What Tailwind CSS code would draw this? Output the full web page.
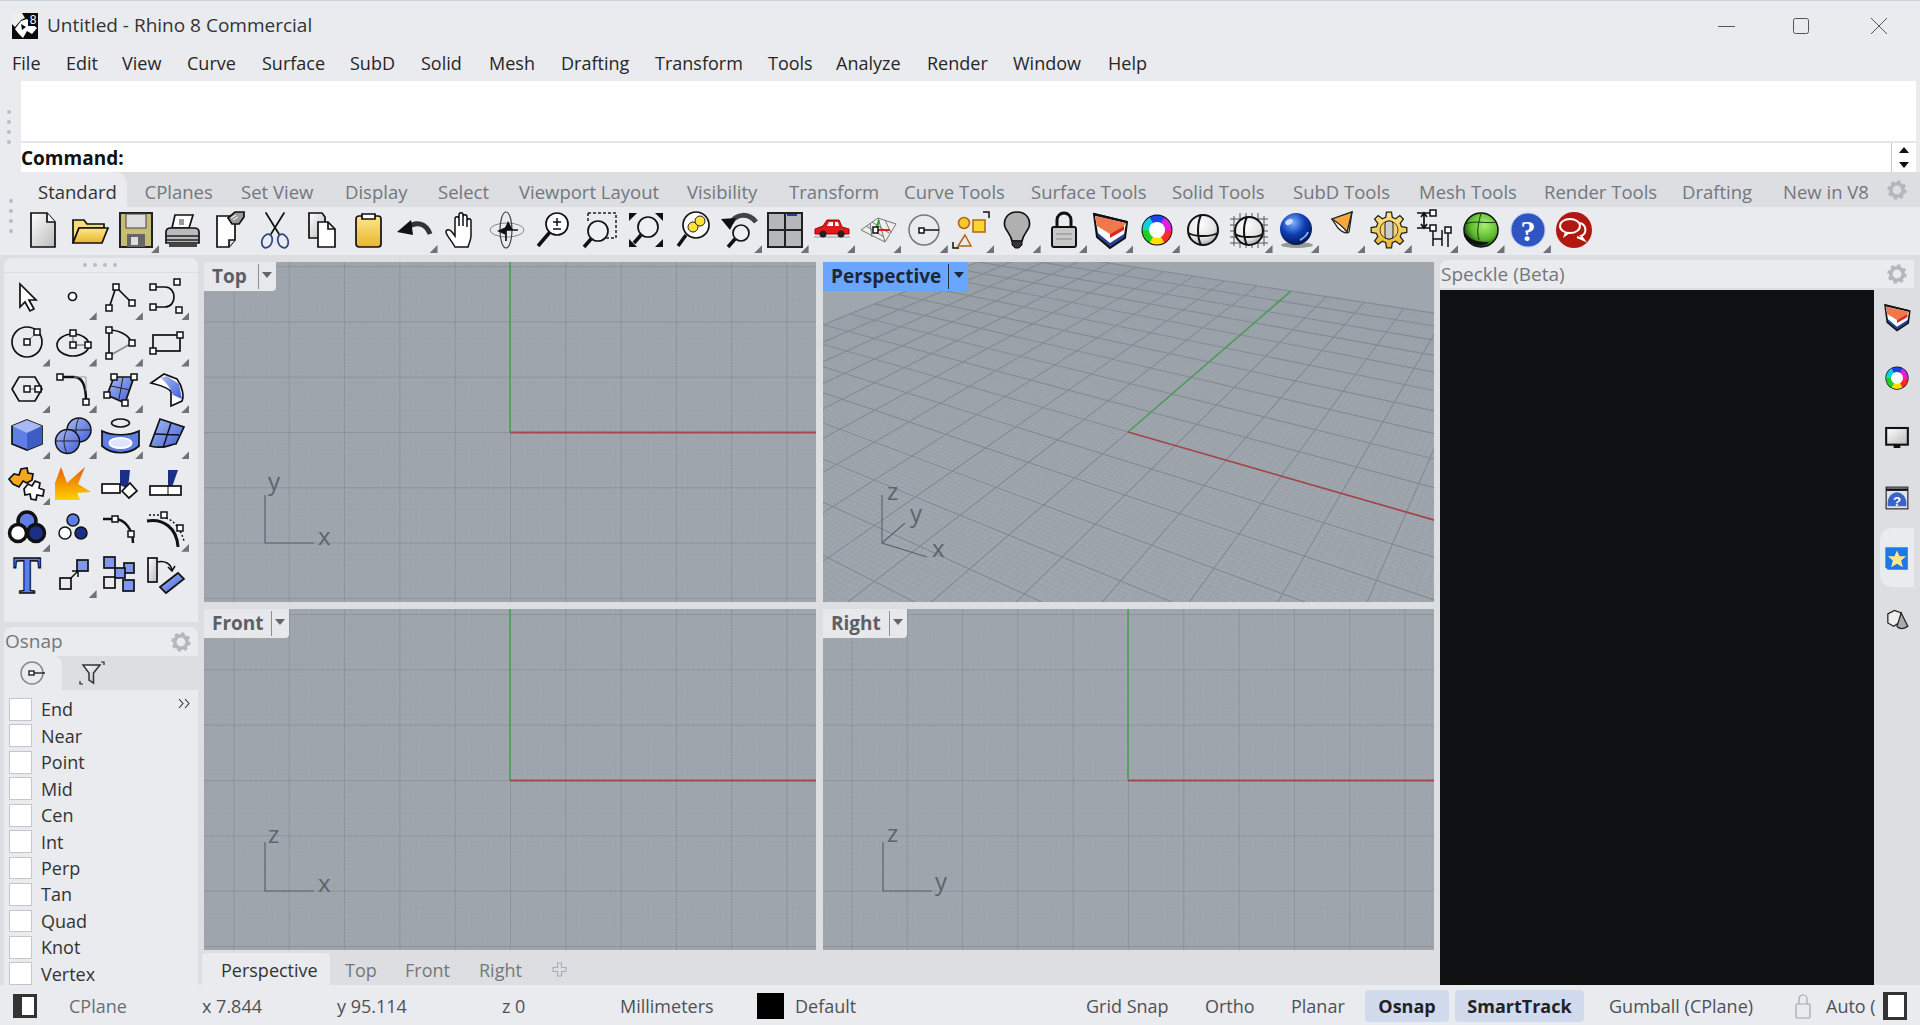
<!DOCTYPE html>
<html lang="en">
<head>
    <meta charset="UTF-8">
    <title>Untitled - Rhino 8 Commercial</title>
    <script src="https://cdn.jsdelivr.net/npm/@tailwindcss/browser@4"></script>
</head>
<body class="w-[1920px] h-[1025px] overflow-hidden bg-[#e9ebef] text-[#262626] text-[18px] leading-none font-['Open_Sans','Noto_Sans',sans-serif]">
<svg class="absolute w-0 h-0">
    <defs>
        <linearGradient id="gw" x1="0" y1="0" x2="1" y2="1"><stop offset="0" stop-color="#fff"/><stop offset="1" stop-color="#bbb"/></linearGradient>
        <linearGradient id="gy" x1="0" y1="0" x2="0" y2="1"><stop offset="0" stop-color="#ffe68a"/><stop offset="1" stop-color="#e8b62c"/></linearGradient>
        <linearGradient id="gb" x1="0" y1="0" x2="1" y2="1"><stop offset="0" stop-color="#a9b9f5"/><stop offset="1" stop-color="#3f60d6"/></linearGradient>
        <linearGradient id="go" x1="0" y1="0" x2="0" y2="1"><stop offset="0" stop-color="#e85c00"/><stop offset="1" stop-color="#ffd000"/></linearGradient>
        <radialGradient id="rs" cx=".4" cy=".3" r=".85"><stop offset="0" stop-color="#fff"/><stop offset=".6" stop-color="#e2e2e2"/><stop offset="1" stop-color="#8a8a8a"/></radialGradient>
        <radialGradient id="rb" cx=".4" cy=".3" r=".75"><stop offset="0" stop-color="#7fb2ff"/><stop offset=".5" stop-color="#0f3fb8"/><stop offset="1" stop-color="#02103c"/></radialGradient>
        <radialGradient id="rg" cx=".6" cy=".35" r=".7"><stop offset="0" stop-color="#a8f070"/><stop offset=".6" stop-color="#5cb82e"/><stop offset="1" stop-color="#0d2a08"/></radialGradient>
        <pattern id="minor" width="5.53" height="5.53" patternUnits="userSpaceOnUse"><path d="M0 0V5.53M0 0H5.53" fill="none" stroke="#979ea6" stroke-width=".8"/></pattern>
        <pattern id="major" width="55.3" height="55.3" patternUnits="userSpaceOnUse"><path d="M0 0V55.3M0 0H55.3" fill="none" stroke="#7d848c" stroke-width="1"/></pattern>
        <symbol id="gear" viewBox="0 0 20 20"><circle cx="10" cy="10" r="6.2" fill="none" stroke="#b4b7bb" stroke-width="3.6"/><circle cx="10" cy="10" r="8.4" fill="none" stroke="#b4b7bb" stroke-width="2.6" stroke-dasharray="3.3 3.3"/></symbol>
        <symbol id="wheel" viewBox="0 0 40 40">
            <circle cx="20" cy="20" r="15.500" fill="#111"/>
            <g fill="none" stroke-width="9">
                <circle cx="20" cy="20" r="10" stroke="#ff2a2a" pathLength="6" stroke-dasharray="1.05 4.95" stroke-dashoffset="0"/>
                <circle cx="20" cy="20" r="10" stroke="#ffe000" pathLength="6" stroke-dasharray="1.05 4.95" stroke-dashoffset="-1"/>
                <circle cx="20" cy="20" r="10" stroke="#20d020" pathLength="6" stroke-dasharray="1.05 4.95" stroke-dashoffset="-2"/>
                <circle cx="20" cy="20" r="10" stroke="#10d0e0" pathLength="6" stroke-dasharray="1.05 4.95" stroke-dashoffset="-3"/>
                <circle cx="20" cy="20" r="10" stroke="#2040f0" pathLength="6" stroke-dasharray="1.05 4.95" stroke-dashoffset="-4"/>
                <circle cx="20" cy="20" r="10" stroke="#e020e0" pathLength="6" stroke-dasharray="1.05 4.95" stroke-dashoffset="-5"/>
            </g>
            <circle cx="20" cy="20" r="8" fill="#fff"/>
        </symbol>
        <symbol id="layers" viewBox="0 0 40 40">
            <path d="M4 4L37 12L35 28L20 38L7 27z" fill="#26409a" stroke="#111" stroke-width="2"/>
            <path d="M5 6L36 13L34 24L20 33L8 23z" fill="#fff"/>
            <path d="M5 6L36 13L33 17L20 24L7 16z" fill="#f0784a"/>
            <path d="M20 24L34 16L34 20L20 28z" fill="#d92a20"/>
            <path d="M4 4L37 12" stroke="#111" stroke-width="2"/>
        </symbol>
    </defs>
</svg>

<!-- titlebar -->
<div class="h-[50px] flex items-center pl-[12px] border-t border-[#c9d3df]">
    <svg width="26" height="26" viewBox="0 0 26 26"><rect width="26" height="26" fill="#0a0a0a"/><path d="M0 0H10L13 5L9 7L3 14L0 11z" fill="#eee"/><path d="M3 16L9 8L15 6L19 10L25 15L20 21L15 18L11 25L6 20z" fill="#fff"/><path d="M9 11L14 14L10 17z" fill="#0a0a0a"/><rect x="16" y="0" width="10" height="13" fill="#0a0a0a"/><text x="21" y="11" font-size="12" fill="#fff" text-anchor="middle" font-family="Liberation Sans">8</text></svg>
    <span class="ml-[9px] text-[#333] text-[19px]">Untitled - Rhino 8 Commercial</span>
    <div class="ml-auto flex items-center mr-[32px]">
        <svg width="18" height="18" class="mr-[56px]"><path d="M0 9.5H17" stroke="#555" stroke-width="1"/></svg>
        <svg width="18" height="18" class="mr-[60px]"><rect x="1.5" y="1.5" width="15" height="15" rx="2" fill="none" stroke="#555" stroke-width="1"/></svg>
        <svg width="18" height="18"><path d="M1 1L17 17M17 1L1 17" stroke="#555" stroke-width="1"/></svg>
    </div>
</div>

<!-- menu -->
<nav class="h-[31px] flex items-start pt-[4px] pl-[12px]">
    <span class="w-[54px]">File</span><span class="w-[56px]">Edit</span><span class="w-[65px]">View</span><span class="w-[75px]">Curve</span><span class="w-[88px]">Surface</span><span class="w-[71px]">SubD</span><span class="w-[68px]">Solid</span><span class="w-[72px]">Mesh</span><span class="w-[94px]">Drafting</span><span class="w-[113px]">Transform</span><span class="w-[68px]">Tools</span><span class="w-[91px]">Analyze</span><span class="w-[86px]">Render</span><span class="w-[95px]">Window</span><span>Help</span>
</nav>

<!-- command area -->
<div class="h-[91px] flex">
    <div class="w-[21px] flex flex-col items-center justify-end gap-[6px] pb-[28px] pr-[3px]">
        <i class="w-1 h-1 rounded-full bg-[#b9bcc0]"></i><i class="w-1 h-1 rounded-full bg-[#b9bcc0]"></i><i class="w-1 h-1 rounded-full bg-[#b9bcc0]"></i><i class="w-1 h-1 rounded-full bg-[#b9bcc0]"></i>
    </div>
    <div class="flex-1 mr-[4px] bg-white flex flex-col">
        <div class="h-[62px] border-b-2 border-[#e4e6e9]"></div>
        <div class="flex-1 flex items-center justify-between">
            <span class="font-bold text-[#111] text-[19px] pt-[2px]">Command:</span>
            <div class="w-[25px] h-full border-l border-[#c8cacd] flex flex-col items-center justify-around">
                <svg width="12" height="8"><path d="M6 1L11 7H1z" fill="#111"/></svg>
                <svg width="12" height="8"><path d="M6 7L11 1H1z" fill="#111"/></svg>
            </div>
        </div>
    </div>
</div>

<!-- toolbar tabs -->
<div class="h-[35px] flex bg-[#dcdee2] text-[#73777c] text-[18.5px] ml-[4px] rounded-tl-lg">
    <div class="w-[17px] bg-[#e9ebef] rounded-tl-lg"></div>
    <span class="w-[106px] pl-[17px] pt-[6px] flex items-center bg-[#e9ebef] text-[#333] rounded-tr-xl">Standard</span>
    <span class="w-[114px] pl-[17.5px] pt-[6px] flex items-center">CPlanes</span>
    <span class="w-[104px] pt-[6px] flex items-center">Set View</span>
    <span class="w-[93px] pt-[6px] flex items-center">Display</span>
    <span class="w-[81px] pt-[6px] flex items-center">Select</span>
    <span class="w-[168px] pt-[6px] flex items-center">Viewport Layout</span>
    <span class="w-[102px] pt-[6px] flex items-center">Visibility</span>
    <span class="w-[115px] pt-[6px] flex items-center">Transform</span>
    <span class="w-[127px] pt-[6px] flex items-center">Curve Tools</span>
    <span class="w-[141px] pt-[6px] flex items-center">Surface Tools</span>
    <span class="w-[121px] pt-[6px] flex items-center">Solid Tools</span>
    <span class="w-[126px] pt-[6px] flex items-center">SubD Tools</span>
    <span class="w-[125px] pt-[6px] flex items-center">Mesh Tools</span>
    <span class="w-[138px] pt-[6px] flex items-center">Render Tools</span>
    <span class="w-[101px] pt-[6px] flex items-center">Drafting</span>
    <span class="w-[104px] pt-[6px] flex items-center">New in V8</span>
    <svg width="20" height="20" class="self-center"><use href="#gear"/></svg>
</div>

<!-- toolbar icons -->
<div class="h-[48px] flex pl-[20px] relative">
    <div class="absolute left-[9px] top-[-8px] flex flex-col gap-[6px]">
        <i class="w-1 h-1 rounded-full bg-[#b9bcc0]"></i><i class="w-1 h-1 rounded-full bg-[#b9bcc0]"></i><i class="w-1 h-1 rounded-full bg-[#b9bcc0]"></i><i class="w-1 h-1 rounded-full bg-[#b9bcc0]"></i>
    </div>
    <div id="main-toolbar" class="flex"></div>
</div>

<!-- main area -->
<div class="h-[730px] bg-[#dcdee2] flex">
    <!-- left column -->
    <aside class="w-[204px] pt-[3px] pl-[4px] pr-[6px] flex flex-col gap-[5px]">
        <div class="h-[364px] bg-[#e9ebef] rounded-t-lg flex flex-col">
            <div class="h-[15px] shrink-0 flex justify-center items-center gap-[6px] pr-[3px] border-b border-[#dcdee2]">
                <i class="w-1 h-1 rounded-full bg-[#b9bcc0]"></i><i class="w-1 h-1 rounded-full bg-[#b9bcc0]"></i><i class="w-1 h-1 rounded-full bg-[#b9bcc0]"></i><i class="w-1 h-1 rounded-full bg-[#b9bcc0]"></i>
            </div>
            <div id="palette" class="grid grid-cols-[repeat(4,46.3px)] auto-rows-[46.3px] mt-[1px]"></div>
        </div>
        <div class="flex-1 bg-[#e9ebef] rounded-t-lg flex flex-col min-h-0">
            <div class="h-[29px] shrink-0 flex items-center justify-between px-[1px] pr-[7px] text-[#73777c] text-[19px]">
                <span>Osnap</span>
                <svg width="20" height="20"><use href="#gear"/></svg>
            </div>
            <div class="h-[34px] shrink-0 flex bg-[#dcdee2]">
                <div class="w-[58px] bg-[#e9ebef] rounded-tr-lg flex items-center justify-center">
                    <svg width="28" height="28" viewBox="0 0 28 28"><circle cx="13" cy="14" r="11" fill="none" stroke="#888" stroke-width="1.5"/><rect x="10" y="12" width="5" height="4" fill="#fff" stroke="#111" stroke-width="1.3"/><path d="M15 14H26" stroke="#111" stroke-width="1.3"/></svg>
                </div>
                <div class="w-[60px] flex items-center justify-center">
                    <svg width="28" height="28" viewBox="0 0 28 28"><path d="M5 6H22L15.500 14V24L11 21V14z" fill="url(#gw)" stroke="#333" stroke-width="1.5"/><path d="M23 3H26V6M2 22V25H5" fill="none" stroke="#222" stroke-width="1.2"/></svg>
                </div>
            </div>
            <div class="relative flex-1 pt-[8px] pl-[5px] flex flex-col gap-[3.65px] text-[#333]">
                <svg width="13" height="11" class="absolute right-[7px] top-[8px]"><path d="M1 1L5 5.500L1 10M7 1L11 5.500L7 10" fill="none" stroke="#333" stroke-width="1.100"/></svg>
                <label class="h-[22.8px] flex items-center gap-[9px]"><i class="w-[23px] h-[22.8px] bg-white border border-[#c3c6ca]"></i>End</label>
                <label class="h-[22.8px] flex items-center gap-[9px]"><i class="w-[23px] h-[22.8px] bg-white border border-[#c3c6ca]"></i>Near</label>
                <label class="h-[22.8px] flex items-center gap-[9px]"><i class="w-[23px] h-[22.8px] bg-white border border-[#c3c6ca]"></i>Point</label>
                <label class="h-[22.8px] flex items-center gap-[9px]"><i class="w-[23px] h-[22.8px] bg-white border border-[#c3c6ca]"></i>Mid</label>
                <label class="h-[22.8px] flex items-center gap-[9px]"><i class="w-[23px] h-[22.8px] bg-white border border-[#c3c6ca]"></i>Cen</label>
                <label class="h-[22.8px] flex items-center gap-[9px]"><i class="w-[23px] h-[22.8px] bg-white border border-[#c3c6ca]"></i>Int</label>
                <label class="h-[22.8px] flex items-center gap-[9px]"><i class="w-[23px] h-[22.8px] bg-white border border-[#c3c6ca]"></i>Perp</label>
                <label class="h-[22.8px] flex items-center gap-[9px]"><i class="w-[23px] h-[22.8px] bg-white border border-[#c3c6ca]"></i>Tan</label>
                <label class="h-[22.8px] flex items-center gap-[9px]"><i class="w-[23px] h-[22.8px] bg-white border border-[#c3c6ca]"></i>Quad</label>
                <label class="h-[22.8px] flex items-center gap-[9px]"><i class="w-[23px] h-[22.8px] bg-white border border-[#c3c6ca]"></i>Knot</label>
                <label class="h-[22.8px] flex items-center gap-[9px]"><i class="w-[23px] h-[22.8px] bg-white border border-[#c3c6ca]"></i>Vertex</label>
            </div>
        </div>
    </aside>

    <!-- viewports -->
    <main class="w-[1230px] pt-[7px] flex flex-col">
        <div class="grid grid-cols-[612px_611px] grid-rows-[340px_341px] gap-[7px]">
            <div class="relative overflow-hidden bg-[#9fa6ae]">
                <svg width="612" height="340" class="block">
                    <g transform="translate(306 170)"><rect x="-400" y="-300" width="800" height="600" fill="url(#minor)"/><rect x="-400" y="-300" width="800" height="600" fill="url(#major)"/><path d="M0 0V-170" stroke="#4b9d57" stroke-width="1.6"/><path d="M0 0.500H306" stroke="#a4484c" stroke-width="1.8"/></g>
                    <path d="M61 233V281H110" fill="none" stroke="#59616a" stroke-width="1.2"/>
                    <text x="64" y="228" font-size="24" fill="#5d646c">y</text><text x="114" y="283" font-size="24" fill="#5d646c">x</text>
                </svg>
                <div class="absolute left-0 top-0 h-[29px] w-[72px] bg-[#e6e8eb] rounded-br flex items-center pl-[8px] font-bold text-[19px] text-[#5c6066]">Top<i class="absolute left-[54px] top-[2px] h-[25px] w-px bg-[#8b8f94]"></i><svg width="10" height="7" class="absolute left-[58px] top-[10px]"><path d="M0 0H10L5 6z" fill="#666"/></svg></div>
            </div>
            <div class="relative overflow-hidden bg-[#9fa6ae]">
                <svg id="persp" width="611" height="340" class="block"></svg>
                <div class="absolute left-0 top-0 h-[29px] w-[145px] bg-[#6aa6ff] flex items-center pl-[8px] font-bold text-[19px] text-[#1d2735]">Perspective<i class="absolute left-[125px] top-[2px] h-[25px] w-px bg-[#24303f]"></i><svg width="10" height="7" class="absolute left-[131px] top-[10px]"><path d="M0 0H10L5 6z" fill="#1d2735"/></svg></div>
            </div>
            <div class="relative overflow-hidden bg-[#9fa6ae]">
                <svg width="612" height="341" class="block">
                    <g transform="translate(306 171)"><rect x="-400" y="-300" width="800" height="600" fill="url(#minor)"/><rect x="-400" y="-300" width="800" height="600" fill="url(#major)"/><path d="M0 0V-171" stroke="#4b9d57" stroke-width="1.6"/><path d="M0 0.500H306" stroke="#a4484c" stroke-width="1.8"/></g>
                    <path d="M61 233V282H110" fill="none" stroke="#59616a" stroke-width="1.2"/>
                    <text x="64" y="234" font-size="24" fill="#5d646c">z</text><text x="114" y="283" font-size="24" fill="#5d646c">x</text>
                </svg>
                <div class="absolute left-0 top-0 h-[29px] w-[85px] bg-[#e6e8eb] rounded-br flex items-center pl-[8px] font-bold text-[19px] text-[#5c6066]">Front<i class="absolute left-[67px] top-[2px] h-[25px] w-px bg-[#8b8f94]"></i><svg width="10" height="7" class="absolute left-[71px] top-[10px]"><path d="M0 0H10L5 6z" fill="#666"/></svg></div>
            </div>
            <div class="relative overflow-hidden bg-[#9fa6ae]">
                <svg width="611" height="341" class="block">
                    <g transform="translate(305 171)"><rect x="-400" y="-300" width="800" height="600" fill="url(#minor)"/><rect x="-400" y="-300" width="800" height="600" fill="url(#major)"/><path d="M0 0V-171" stroke="#4b9d57" stroke-width="1.6"/><path d="M0 0.500H306" stroke="#a4484c" stroke-width="1.8"/></g>
                    <path d="M60 233V282H109" fill="none" stroke="#59616a" stroke-width="1.2"/>
                    <text x="64" y="233" font-size="24" fill="#5d646c">z</text><text x="112" y="281" font-size="24" fill="#5d646c">y</text>
                </svg>
                <div class="absolute left-0 top-0 h-[29px] w-[84px] bg-[#e6e8eb] rounded-br flex items-center pl-[8px] font-bold text-[19px] text-[#5c6066]">Right<i class="absolute left-[66px] top-[2px] h-[25px] w-px bg-[#8b8f94]"></i><svg width="10" height="7" class="absolute left-[70px] top-[10px]"><path d="M0 0H10L5 6z" fill="#666"/></svg></div>
            </div>
        </div>
        <div class="h-[32px] mt-[3px] flex items-stretch -ml-[2px] text-[#73777c]">
            <span class="w-[128px] bg-[#e9ebef] text-[#333] flex items-center pl-[19px] pt-[2px] rounded-t">Perspective</span>
            <span class="w-[60px] ml-[15px] flex items-center pt-[2px]">Top</span>
            <span class="w-[74px] flex items-center pt-[2px]">Front</span>
            <span class="w-[73px] flex items-center pt-[2px]">Right</span>
            <svg width="15" height="15" class="self-center mt-[1px]"><path d="M5.500 1H9.500V5.500H14V9.500H9.500V14H5.500V9.500H1V5.500H5.500z" fill="none" stroke="#a9acb0" stroke-width="1.100"/></svg>
        </div>
    </main>

    <!-- speckle panel -->
    <section class="flex-1 pt-[5px] pl-[6px] flex min-w-0">
        <div class="flex-1 flex flex-col">
            <div class="h-[28px] flex items-center bg-[#e9ebef] rounded-tl-lg text-[#73777c] text-[19px] pl-[1px] -mr-[40px] pr-[7px] justify-between">
                <span>Speckle (Beta)</span>
                <svg width="20" height="20"><use href="#gear"/></svg>
            </div>
            <div class="flex-1 bg-[#0f1012] mt-[2px] w-[434px]"></div>
        </div>
        <div id="side-tabs" class="w-[34px] ml-[6px] mt-[26px] mr-[6px] flex flex-col"></div>
    </section>
</div>

<!-- status bar -->
<footer class="h-[40px] flex items-center pl-[13px] pt-[1px] text-[#4d5156]">
    <svg width="24" height="24" class="mr-[32px] shrink-0"><rect x="1.500" y="1.500" width="21" height="21" fill="#fff" stroke="#333" stroke-width="3"/><rect x="1" y="1" width="8" height="22" fill="#333"/></svg>
    <span class="w-[133px] text-[#6a6e73]">CPlane</span>
    <span class="w-[135px]">x 7.844</span>
    <span class="w-[165px]">y 95.114</span>
    <span class="w-[118px]">z 0</span>
    <span class="w-[137px]">Millimeters</span>
    <i class="w-[27px] h-[26px] bg-black mr-[11px]"></i>
    <span class="w-[291px]">Default</span>
    <span class="w-[119px]">Grid Snap</span>
    <span class="w-[86px]">Ortho</span>
    <span class="w-[74px]">Planar</span>
    <span class="w-[84px] h-[32px] bg-[#d2daee] rounded flex items-center justify-center font-bold text-[#1f2328]">Osnap</span>
    <span class="w-[129px] h-[32px] ml-[6px] bg-[#d2daee] rounded flex items-center justify-center font-bold text-[#1f2328]">SmartTrack</span>
    <span class="w-[186px] ml-[25px]">Gumball (CPlane)</span>
    <svg width="16" height="26" class="mr-[15px] shrink-0"><rect x="1" y="11" width="14" height="14" rx="1" fill="none" stroke="#a3a6aa" stroke-width="1.2"/><path d="M4 11V6a4 4 0 0 1 8 0V11" fill="none" stroke="#a3a6aa" stroke-width="1.2"/></svg>
    <span class="w-[57px] whitespace-nowrap">Auto (</span>
    <svg width="24" height="28" class="shrink-0"><rect x="1.500" y="1.500" width="21" height="25" fill="#fff" stroke="#333" stroke-width="3"/><rect x="1" y="1" width="4" height="26" fill="#333"/></svg>
</footer>

<script>
    // drawing helpers
    const sq = (x, y, f = '#fff') => `<rect x="${x - 3}" y="${y - 3}" width="6" height="6" fill="${f}" stroke="#111" stroke-width="1.5"/>`;
    const K = 'stroke="#111" stroke-width="1.7"';
    const gearPath = (cx, cy, r1, r2, n) => {
        let d = '';
        for (let i = 0; i < n; i++) {
            const a = i * 2 * Math.PI / n, w = Math.PI / n / 2;
            [[r1, -w * 1.3], [r2, -w * .7], [r2, w * .7], [r1, w * 1.3]].forEach(p => {
                d += (d ? 'L' : 'M') + (cx + p[0] * Math.cos(a + p[1])).toFixed(1) + ' ' + (cy + p[0] * Math.sin(a + p[1])).toFixed(1);
            });
        }
        return d + 'z';
    };

    // main toolbar: [svg body, has flyout]
    const tools = [
        [`<path d="M8 3H24L32 12V37H8z" fill="url(#gw)" ${K}/><path d="M24 3V12H32" fill="#fff" ${K}/>`],
        [`<path d="M3 10H14L17 14H34V18H9L3 33z" fill="#f6dc7c" ${K}/><path d="M9 18H38L32 33H3z" fill="url(#gy)" ${K}/>`],
        [`<path d="M4 3H36V37H4z" fill="#c6bd74" stroke="#222" stroke-width="2"/><rect x="10" y="4" width="20" height="14" fill="#ddd" stroke="#444"/><rect x="11" y="24" width="18" height="13" fill="#666"/><rect x="15" y="27" width="7" height="8" fill="#ddd"/>`, 1],
        [`<path d="M13 5H31L27 18H10z" fill="#fff" ${K}/><rect x="17" y="9" width="5" height="6" fill="#999"/><path d="M4 22Q4 18 9 18H32Q37 18 37 22V33H4z" fill="#bbb" ${K}/><path d="M4 26H37M4 30H37" stroke="#222" stroke-width="1.5"/><rect x="7" y="33" width="28" height="4" fill="#444"/>`],
        [`<path d="M8 6H26V30L20 37H8z" fill="#fff" ${K}/><path d="M20 37V30H26" fill="#ddd" ${K}/><path d="M19 8L26 2H35V7L30 14H23z" fill="#999" ${K}/><path d="M22 8L27 5M24 10L29 7" stroke="#fff"/>`],
        [`<path d="M11 3L24 24M29 3L16 24" ${K} stroke-linecap="round"/><ellipse cx="12" cy="31" rx="5" ry="7" fill="none" stroke="#334a80" stroke-width="1.8" transform="rotate(20 12 31)"/><ellipse cx="28" cy="31" rx="5" ry="7" fill="none" stroke="#334a80" stroke-width="1.8" transform="rotate(-20 28 31)"/>`],
        [`<path d="M7 3H20L23 7V28H7z" fill="url(#gw)" ${K}/><path d="M16 12H26L33 19V37H16z" fill="#fff" ${K}/><path d="M26 12V19H33" fill="none" ${K}/>`],
        [`<rect x="8" y="6" width="25" height="31" rx="3" fill="url(#gy)" ${K}/><path d="M14 9V4H27V9z" fill="#fff" ${K}/>`],
        [`<path d="M36 24C32 13 22 11 14 17" fill="none" stroke="#333" stroke-width="5"/><path d="M3 22L17 10L19 25z" fill="#111"/>`, 1],
        [`<path d="M14 37C11 31 5 25 5 22c0-3 4-3 6 0l3 4V9c0-3 4-3 4 0v7V5c0-3 4-3 4 0v11V7c0-3 4-3 4 0v10V11c0-3 4-3 4 0v15c0 4-2 7-3 11z" fill="#fff" stroke="#111" stroke-width="1.5"/>`],
        [`<ellipse cx="20" cy="20" rx="17" ry="7" fill="none" stroke="#888" stroke-width="1"/><ellipse cx="19" cy="20" rx="6" ry="18" fill="none" stroke="#444" stroke-width="1.2"/><path d="M21 11L26 20H17z" fill="#111"/><path d="M10 21L19 17V25z" fill="#111"/><path d="M19 20H31M19 20V31" stroke="#111" stroke-width="1.700"/>`],
        [`<circle cx="24" cy="14" r="11" fill="#fff" ${K}/><path d="M17 22L5 36" stroke="#111" stroke-width="3.500"/><path d="M20 12H28M24 8V16M20 19H28" stroke="#111" stroke-width="1.500"/>`],
        [`<path d="M8 3H36V28H26" fill="none" stroke="#222" stroke-width="1.500" stroke-dasharray="3 2"/><path d="M8 3V12" stroke="#222" stroke-width="1.500" stroke-dasharray="3 2"/><circle cx="18" cy="21" r="10" fill="#eef0f3" ${K}/><path d="M11 29L4 37" stroke="#111" stroke-width="3.500"/>`],
        [`<path d="M3 3H11L3 11zM37 3V11L29 3zM3 37V29L11 37zM37 37H29L37 29z" fill="#111"/><circle cx="22" cy="17" r="10" fill="#eef0f3" ${K}/><path d="M15 25L8 33" stroke="#111" stroke-width="3.500"/>`],
        [`<circle cx="23" cy="15" r="13" fill="#fff" ${K}/><circle cx="20" cy="17" r="5" fill="#ffe23a" stroke="#222"/><circle cx="27" cy="11" r="5" fill="#ffe23a" stroke="#222"/><path d="M13 25L5 36" stroke="#111" stroke-width="3.500"/>`],
        [`<path d="M12 13C17 3 30 3 37 12" fill="none" stroke="#444" stroke-width="5"/><path d="M2 9L17 8L11 20z" fill="#111"/><circle cx="22" cy="23" r="8" fill="#eef0f3" ${K}/><path d="M16 29L9 37" stroke="#111" stroke-width="3.500"/>`, 1],
        [`<rect x="3" y="3" width="34" height="34" fill="#b5b7ba" stroke="#222" stroke-width="2"/><path d="M20 3V37M3 20H37" stroke="#222" stroke-width="2"/><path d="M22 5H32" stroke="#2a3c90" stroke-width="2"/>`, 1],
        [`<path d="M2 27H38" stroke="#999" stroke-width="1"/><path d="M3 24V19L11 16L15 10H27L30 17L37 19V24z" fill="#e01a1a" stroke="#a00" stroke-width="1"/><path d="M17 12H21V16H15zM23 12H26L27 16H23z" fill="#fff"/><circle cx="11" cy="24" r="3.500" fill="#222"/><circle cx="29" cy="24" r="3.500" fill="#222"/>`, 1],
        [`<path d="M3 20L20 8L38 14L27 32z" fill="#eee" stroke="#777"/><path d="M8 16L26 27M14 12L31 23M20 8L27 32M12 13L14 27M27 10L33 23" stroke="#777" fill="none"/><path d="M18 20H32" stroke="#d22" stroke-width="2"/><path d="M18 20L21 10" stroke="#2a2" stroke-width="2"/><rect x="15" y="17" width="5" height="6" fill="#fff" stroke="#111" stroke-width="1.500"/>`, 1],
        [`<circle cx="19" cy="20" r="15" fill="none" stroke="#777" stroke-width="1.500"/><rect x="14" y="18" width="5" height="5" fill="#fff" stroke="#111" stroke-width="1.500"/><path d="M19 20H34" stroke="#111" stroke-width="1.500"/>`, 1],
        [`<circle cx="13" cy="13" r="5.500" fill="#f8c830" stroke="#b8610c" stroke-width="1.500"/><rect x="22" y="10" width="12" height="12" fill="#f8d830" stroke="#b8610c" stroke-width="1.500"/><path d="M14 25L20 36H7z" fill="none" stroke="#b8610c" stroke-width="1.500"/><path d="M32 2H38V8M2 32V38H8" fill="none" stroke="#111" stroke-width="1.500"/>`, 1],
        [`<path d="M20 2C10 2 6 10 8 17C10 22 14 25 15 31H25C26 25 30 22 32 17C34 10 30 2 20 2z" fill="#b0b0b0" ${K}/><path d="M15 31H25V35L22 38H18L15 35z" fill="#333" stroke="#111"/>`, 1],
        [`<path d="M13 17V10a7 7 0 0 1 14 0V17" fill="none" stroke="#111" stroke-width="3"/><rect x="8" y="17" width="24" height="20" rx="2" fill="#c8c8c8" stroke="#111" stroke-width="2"/><path d="M12 24H28M12 29H28" stroke="#888"/>`, 1],
        [`<use href="#layers" width="40" height="40"/>`, 1],
        [`<use href="#wheel" width="40" height="40"/>`, 1],
        [`<circle cx="20" cy="20" r="15" fill="url(#rs)" stroke="#111" stroke-width="2"/><path d="M5 23C12 27 28 27 35 23M18 5C14 14 14 27 18 35" fill="none" stroke="#111" stroke-width="2"/>`],
        [`<path d="M5 6V36M11 3V38M17 3V38M23 3V38M29 3V38M35 6V36M1 9H39M1 15H39M1 21H39M1 27H39M1 33H39" stroke="#555" stroke-width="1"/><circle cx="20" cy="21" r="14" fill="url(#rs)" stroke="#111" stroke-width="2"/><path d="M6 24C12 28 28 28 34 24M18 7C14 15 14 27 18 35" fill="none" stroke="#111" stroke-width="2"/>`, 1],
        [`<ellipse cx="21" cy="35" rx="16" ry="3" fill="#999"/><circle cx="20" cy="19" r="16" fill="url(#rb)"/><ellipse cx="13" cy="12" rx="4" ry="2.500" fill="#cfe0ff" transform="rotate(-30 13 12)"/><path d="M24 30Q30 27 32 22" stroke="#7fb2ff" stroke-width="2" fill="none"/>`, 1],
        [`<path d="M10 9L30 2L27 22C24 24 20 22 16 18z" fill="#fff" stroke="#222" stroke-width="1.300"/><path d="M10 9L30 2L25 22C21 17 15 12 10 9z" fill="#f7a93d" stroke="#222" stroke-width="1.300"/>`, 1],
        [`<path d="${gearPath(20, 20, 13, 18, 8)}" fill="url(#gy)" stroke="#222" stroke-width="1.300"/><circle cx="20" cy="20" r="9" fill="#f2d274" stroke="#222" stroke-width=".8"/><rect x="16" y="11" width="8" height="18" rx="3" fill="#ccc" stroke="#222"/>`, 1],
        [`<path d="M2 3H19M2 18H19M18 18V36M27 20V36M18 29H27" fill="none" stroke="#111" stroke-width="1.500"/><path d="M9 4V17M6 7L9 3L12 7M6 14L9 18L12 14" fill="none" stroke="#111" stroke-width="1.700"/>${sq(18, 3)}${sq(18, 18)}${sq(33, 20)}<path d="M33 23V37" stroke="#111" stroke-width="1.500"/>`, 1],
        [`<circle cx="20" cy="20" r="17" fill="url(#rg)" stroke="#111" stroke-width="1.500"/><path d="M3 22C10 30 14 32 28 32C24 37 12 38 3 26z" fill="#111"/><path d="M20 3C18 12 15 20 18 30M4 14C14 10 26 14 36 12" stroke="#1a3a10" fill="none"/>`, 1],
        [`<circle cx="20" cy="20" r="17" fill="#2f55c0"/><circle cx="20" cy="20" r="17" fill="none" stroke="#b8c8f0" stroke-width="1"/><text x="20" y="31" font-size="30" font-weight="bold" fill="#fff" text-anchor="middle" font-family="Liberation Serif">?</text>`, 1],
        [`<circle cx="20" cy="20" r="18" fill="#b01810"/><ellipse cx="16" cy="16" rx="10" ry="7" fill="#b01810" stroke="#fff" stroke-width="2"/><path d="M11 22L9 28L16 23" fill="#fff"/><path d="M26 13C33 15 33 24 27 26L30 30L23 27" fill="none" stroke="#fff" stroke-width="2"/>`]
    ];

    // left palette
    const palette = [
        [`<path d="M16 10V33L21 28L26 37L30 35L25 26H32z" fill="#fff" ${K}/>`],
        [`<circle cx="22.500" cy="22.500" r="4" fill="#fff" ${K}/>`, 1],
        [`<path d="M12 34L19 13L35 29" fill="none" ${K}/>${sq(19, 13)}${sq(12, 34)}${sq(35, 29)}`, 1],
        [`<path d="M10 13H22C34 13 34 33 22 33H10" fill="none" ${K}/>${sq(10, 13)}${sq(34, 8)}${sq(10, 33)}${sq(36, 36)}`, 1],

        [`<circle cx="23" cy="22" r="15" fill="none" ${K}/><path d="M23 22L33 12" stroke="#888"/>${sq(23, 22)}${sq(33, 12)}`, 1],
        [`<ellipse cx="23" cy="25" rx="16" ry="11" fill="none" ${K}/><path d="M23 13V25H38" fill="none" stroke="#555"/>${sq(23, 13)}${sq(23, 25)}${sq(38, 25)}`, 1],
        [`<path d="M12 10V36" ${K}/><path d="M12 36L35 23" stroke="#888" stroke-width="1.500"/><path d="M12 10C22 10 32 15 35 23" fill="none" ${K}/>${sq(12, 10)}${sq(35, 23)}${sq(12, 36)}`, 1],
        [`<rect x="10" y="15" width="27" height="16" fill="none" ${K}/>${sq(37, 15)}${sq(10, 31)}`, 1],

        [`<path d="M8 22L15 10H31L38 22L31 34H15z" fill="none" ${K}/><path d="M23 22H34" stroke="#555"/>${sq(23, 22)}${sq(34, 22)}`, 1],
        [`<path d="M10 10H24Q36 10 36 34" fill="none" stroke="#111" stroke-width="2.500"/><path d="M24 10H36V24" fill="none" stroke="#999"/>${sq(10, 10)}${sq(36, 35)}`, 1],
        [`<path d="M17 10H37L28 36L10 28z" fill="url(#gb)" ${K}/><path d="M26 10L22 32M14 19L33 23" stroke="#222" fill="none"/>${sq(17, 10)}${sq(37, 10)}${sq(10, 28)}${sq(28, 36)}`, 1],
        [`<path d="M8 16L21 7L34 12C40 20 41 30 39 34L28 39V25C26 20 15 18 8 16z" fill="#fff" ${K}/><path d="M18 11L24 9L36 17L39 32L30 28C28 22 24 16 18 11z" fill="url(#gb)"/>`, 1],

        [`<path d="M23 7L38 13V31L23 37L8 31V13z" fill="#5f7ee6" ${K}/><path d="M23 7L38 13L23 20L8 13z" fill="#a8b8f2"/><path d="M23 20V37L38 31V13z" fill="#3e5dc4"/>`, 1],
        [`<circle cx="29" cy="17" r="12" fill="url(#gb)" stroke="#111" stroke-width="1.500"/><path d="M17 17H41M29 5C25 12 25 22 29 29" fill="none" stroke="#223"/><circle cx="17.500" cy="28.500" r="12" fill="url(#gb)" stroke="#111" stroke-width="1.500"/><path d="M6 28H29M17 17C13 23 13 33 17 40" fill="none" stroke="#223"/>`, 1],
        [`<ellipse cx="23.500" cy="10" rx="9" ry="4" fill="none" ${K}/><path d="M5 18C15 23 32 23 42 18V33C32 42 15 42 5 33z" fill="#5f7ee6" ${K}/><ellipse cx="23.500" cy="30" rx="11" ry="5" fill="#dde4fb" stroke="#fff" stroke-width="2"/>`, 1],
        [`<path d="M17 6L41 14L33 31C27 31 22 37 7 33z" fill="url(#gb)" ${K}/><path d="M28 10L20 35M12 21L36 22" stroke="#112" stroke-width="1.500" fill="none"/>`, 1],

        [`<path d="M5 20L10 15L15 16L17 10L23 9L24 14L29 15L28 21L23 24L19 22L15 28L9 25z" fill="#f5a81c" ${K}/><path d="M20 30L24 25L28 27L31 22L36 24L35 29L40 31L39 37L33 36L32 41L27 40L26 35L21 36z" fill="#fff" ${K}/>`, 1],
        [`<path d="M5 41L5 24L11 8L17 24L35 8L28 25L41 33L27 34L30 41z" fill="url(#go)"/>`],
        [`<path d="M23 11H33L31 30L23 26z" fill="#1c2f86"/><rect x="5" y="25" width="18" height="9" fill="#fff" ${K}/><path d="M25 32L33 24L40 32L32 39z" fill="#fff" ${K}/>`],
        [`<path d="M25 11H35L29 28H25z" fill="#1c2f86"/><rect x="7" y="27" width="31" height="9" fill="#fff" ${K}/><path d="M25 27V36" stroke="#111"/>`],

        [`<circle cx="23" cy="15" r="9" fill="#5f7ee6" stroke="#111" stroke-width="3.500"/><circle cx="14" cy="27" r="8.500" fill="#fff" stroke="#111" stroke-width="3.500"/><circle cx="32" cy="27" r="8.500" fill="#1c2f86" stroke="#111" stroke-width="3.500"/>`, 1],
        [`<circle cx="23" cy="14" r="6" fill="#5f7ee6" stroke="#111" stroke-width="1.500"/><circle cx="15" cy="27" r="6" fill="#fff" stroke="#111" stroke-width="1.500"/><circle cx="31" cy="27" r="6" fill="#1c2f86" stroke="#111" stroke-width="1.500"/>`],
        [`<path d="M6 13H18C28 13 36 24 36 37" fill="none" stroke="#111" stroke-width="2.500"/>${sq(18, 13)}${sq(34, 28)}`],
        [`<path d="M4 15C20 12 34 22 35 41" fill="none" stroke="#111" stroke-width="3"/><path d="M6 9H16M23 12C32 15 38 24 41 35" fill="none" stroke="#111" stroke-width="1.500" stroke-dasharray="2 2"/>${sq(21, 9)}${sq(37, 22)}`, 1],

        [`<text transform="translate(23 40.500) scale(.8 1)" font-size="52" font-weight="bold" fill="#5f7ee6" stroke="#111" stroke-width="1.500" text-anchor="middle" font-family="Liberation Serif">T</text>`],
        [`<rect x="10" y="26" width="11" height="11" fill="#ececec" ${K}/><rect x="27" y="8" width="11" height="11" fill="#7f98ea" ${K}/><path d="M20 27L28 19M22 19H28V25" fill="none" stroke="#111" stroke-width="1.500"/>`, 1],
        [`<rect x="7" y="5" width="11" height="11" fill="#7f98ea" ${K}/><rect x="27" y="11" width="10" height="10" fill="#7f98ea" ${K}/><rect x="18" y="16" width="10" height="10" fill="#7f98ea" ${K}/><rect x="7" y="25" width="11" height="11" fill="#ececec" ${K}/><rect x="26" y="28" width="11" height="11" fill="#7f98ea" ${K}/>`],
        [`<rect x="5" y="6" width="9" height="24" fill="url(#gw)" ${K}/><path d="M14 10C22 8 28 12 29 18M25 15L29 19L32 14" fill="none" stroke="#111" stroke-width="1.500"/><path d="M17 35L35 21L41 27L23 41z" fill="url(#gb)" ${K}/>`]
    ];

    const cell = (item, size, cls) => `<div class="relative flex items-center justify-center ${cls}"><svg width="${size}" height="${size}" viewBox="0 0 ${size} ${size}" class="overflow-visible">${item[0]}</svg>${item[1] ? '<i class="absolute right-0 bottom-0 w-2 h-2 bg-[#6f7276] [clip-path:polygon(100%_0,100%_100%,0_100%)]"></i>' : ''}</div>`;
    document.getElementById('main-toolbar').innerHTML = tools.map(t => cell(t, 40, 'w-[46.4px] h-[46px]')).join('');
    document.getElementById('palette').innerHTML = palette.map(t => cell(t, 46, 'w-[46.3px] h-[46.3px]')).join('');

    // side tabs of the right panel
    const sideIcons = [
        ['<use href="#layers" width="36" height="36"/>', 'h-[62px]'],
        ['<use href="#wheel" width="36" height="36"/>', 'h-[60px]'],
        ['<rect x="5" y="6" width="26" height="20" fill="url(#gw)" stroke="#111" stroke-width="2.500"/><path d="M14 26H22V30H14z" fill="#111"/>', 'h-[60px]'],
        ['<rect x="5" y="5" width="26" height="26" fill="#dfe3f0" stroke="#333" stroke-width="1.500"/><path d="M5 8H31" stroke="#111" stroke-width="3"/><path d="M7 28C5 15 14 11 18 11S31 15 29 28z" fill="#3c62c8"/><text x="18" y="27" font-size="16" font-weight="bold" fill="#fff" text-anchor="middle" font-family="Liberation Sans">?</text>', 'h-[60px]'],
        ['<path d="M4 5H31V32H7L4 29z" fill="#1f78e8"/><path d="M18 9L21 16L29 16L23 21L25 29L18 25L11 29L13 21L7 16L15 16z" fill="#ffe88a"/>', 'h-[59px] bg-[#e9ebef] rounded-l-xl'],
        ['<path d="M7 13L15 9L23 12L23 22L14 28L7 24z" fill="#eee" stroke="#222" stroke-width="1.500"/><path d="M23 12L31 28C26 32 20 31 18 28z" fill="#aaa" stroke="#222" stroke-width="1.500"/>', 'h-[62px]']
    ];
    document.getElementById('side-tabs').innerHTML = sideIcons.map(i => `<div class="w-[34px] flex items-center justify-center ${i[1]}"><svg width="30" height="30" viewBox="0 0 36 36">${i[0]}</svg></div>`).join('');

    // perspective grid, projected on the construction plane
    const P = (X, Y) => {
        const d = 1 - .366 * X + .479 * Y;
        return [(-.366 * X * -115 + .479 * Y * 1631 + 1128) / d - 823, (-.366 * X * 74.5 + .479 * Y * -3 + 432) / d - 262];
    };
    const ln = (a, b, attrs) => `<line x1="${a[0].toFixed(1)}" y1="${a[1].toFixed(1)}" x2="${b[0].toFixed(1)}" y2="${b[1].toFixed(1)}" ${attrs}/>`;
    let g = '';
    for (let i = -100; i <= 100; i++) {
        if (i % 10 === 0) continue;
        const a = 'stroke="#959ca4" stroke-width=".5"';
        g += ln(P(i / 100, -1), P(i / 100, 1), a) + ln(P(-1, i / 100), P(1, i / 100), a);
    }
    for (let i = -100; i <= 100; i += 10) {
        const a = 'stroke="#838a92" stroke-width="1.100"';
        g += ln(P(i / 100, -1), P(i / 100, 1), a) + ln(P(-1, i / 100), P(1, i / 100), a);
    }
    g += ln(P(0, 0), P(0, 1), 'stroke="#4b9d57" stroke-width="1.600"') + ln(P(0, 0), P(1, 0), 'stroke="#a4484c" stroke-width="1.800"');
    g += '<path d="M59 233V281L104 295M59 281L82 261" fill="none" stroke="#59616a" stroke-width="1.100"/>';
    g += '<text x="64" y="238" font-size="24" fill="#5d646c">z</text><text x="87" y="260" font-size="24" fill="#5d646c">y</text><text x="109" y="295" font-size="24" fill="#5d646c">x</text>';
    document.getElementById('persp').innerHTML = g;
</script>
</body>
</html>
